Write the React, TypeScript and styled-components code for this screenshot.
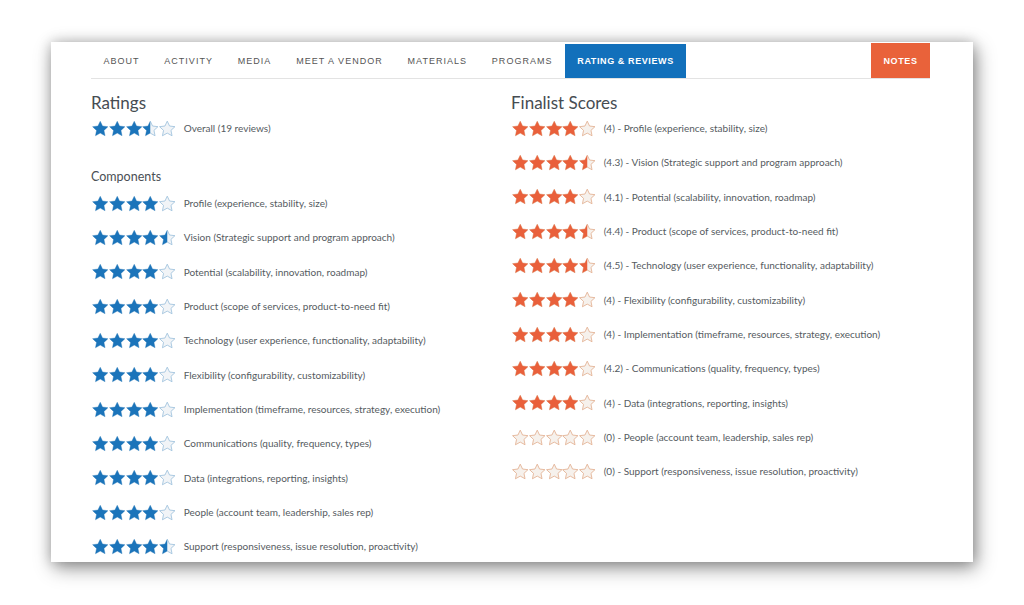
import { useId } from 'react'
import styled, { createGlobalStyle } from 'styled-components'

type StarsProps = {
  value: number
  tone: 'blue' | 'orange'
}

type ScoreRowProps = StarsProps & {
  label: string
}

const palette = {
  blue: { fill: '#1b74ba', emptyFill: '#f1f4f7', emptyStroke: '#9cc0dc' },
  orange: { fill: '#e9603b', emptyFill: '#f6f1ec', emptyStroke: '#e2ae8e' },
}

const tabs = ['About', 'Activity', 'Media', 'Meet a Vendor', 'Materials', 'Programs']

const components = [
  { label: 'Profile (experience, stability, size)', value: 4 },
  { label: 'Vision (Strategic support and program approach)', value: 4.5 },
  { label: 'Potential (scalability, innovation, roadmap)', value: 4 },
  { label: 'Product (scope of services, product-to-need fit)', value: 4 },
  { label: 'Technology (user experience, functionality, adaptability)', value: 4 },
  { label: 'Flexibility (configurability, customizability)', value: 4 },
  { label: 'Implementation (timeframe, resources, strategy, execution)', value: 4 },
  { label: 'Communications (quality, frequency, types)', value: 4 },
  { label: 'Data (integrations, reporting, insights)', value: 4 },
  { label: 'People (account team, leadership, sales rep)', value: 4 },
  { label: 'Support (responsiveness, issue resolution, proactivity)', value: 4.5 },
]

const finalist = [
  { label: '(4) - Profile (experience, stability, size)', value: 4 },
  { label: '(4.3) - Vision (Strategic support and program approach)', value: 4.5 },
  { label: '(4.1) - Potential (scalability, innovation, roadmap)', value: 4 },
  { label: '(4.4) - Product (scope of services, product-to-need fit)', value: 4.5 },
  { label: '(4.5) - Technology (user experience, functionality, adaptability)', value: 4.5 },
  { label: '(4) - Flexibility (configurability, customizability)', value: 4 },
  { label: '(4) - Implementation (timeframe, resources, strategy, execution)', value: 4 },
  { label: '(4.2) - Communications (quality, frequency, types)', value: 4 },
  { label: '(4) - Data (integrations, reporting, insights)', value: 4 },
  { label: '(0) - People (account team, leadership, sales rep)', value: 0 },
  { label: '(0) - Support (responsiveness, issue resolution, proactivity)', value: 0 },
]

// fat five-point star, fits a 20x19 box
const STAR = 'M10 0.6l2.8 5.9 6.5 0.8-4.8 4.5 1.3 6.5L10 15.1l-5.8 3.2 1.3-6.5-4.8-4.5 6.5-0.8z'

export default function App() {
  return (
    <>
      <GlobalStyle />
      <Page>
        <Card>
          <TabBar>
            {tabs.map((t) => (
              <Tab key={t}>{t}</Tab>
            ))}
            <Tab $active>Rating &amp; Reviews</Tab>
            <NotesButton>Notes</NotesButton>
          </TabBar>
          <Columns>
            <Column>
              <Heading>Ratings</Heading>
              <ScoreRow tone="blue" value={3.5} label="Overall (19 reviews)" />
              <SubHeading>Components</SubHeading>
              <RowList>
                {components.map((c) => (
                  <ScoreRow key={c.label} tone="blue" value={c.value} label={c.label} />
                ))}
              </RowList>
            </Column>
            <Column>
              <Heading>Finalist Scores</Heading>
              <RowList>
                {finalist.map((c) => (
                  <ScoreRow key={c.label} tone="orange" value={c.value} label={c.label} />
                ))}
              </RowList>
            </Column>
          </Columns>
        </Card>
      </Page>
    </>
  )
}

const ScoreRow = ({ tone, value, label }: ScoreRowProps) => {
  return (
    <Row>
      <Stars tone={tone} value={value} />
      <RowLabel>{label}</RowLabel>
    </Row>
  )
}

const Stars = ({ tone, value }: StarsProps) => {
  return (
    <StarGroup>
      {[0, 1, 2, 3, 4].map((i) => (
        <Star key={i} tone={tone} part={Math.max(0, Math.min(1, value - i))} />
      ))}
    </StarGroup>
  )
}

const Star = ({ tone, part }: { tone: 'blue' | 'orange'; part: number }) => {
  const id = useId()
  const c = palette[tone]
  return (
    <svg width="16.5" height="17" viewBox="0 0 20 19">
      <defs>
        <clipPath id={id}>
          <rect x="0" y="0" width={20 * part} height="19" />
        </clipPath>
      </defs>
      <path d={STAR} fill={c.emptyFill} stroke={c.emptyStroke} strokeWidth="1" strokeLinejoin="round" />
      {part > 0 && <path d={STAR} fill={c.fill} clipPath={`url(#${id})`} />}
    </svg>
  )
}

const GlobalStyle = createGlobalStyle`
  html, body {
    margin: 0;
    background: #ffffff;
  }
  body {
    font-family: Lato, "Open Sans", sans-serif;
  }
`

const Page = styled.div`
  width: 1024px;
  height: 605px;
  padding: 42px 0 0 51px;
  box-sizing: border-box;
  overflow: hidden;
`

const Card = styled.div`
  width: 922px;
  height: 520px;
  box-sizing: border-box;
  padding: 0 43px 0 40px;
  background: #fff;
  box-shadow: 3px 6px 18px rgba(0, 0, 0, 0.42), 0 0 12px rgba(0, 0, 0, 0.2);
  overflow: hidden;
`

const TabBar = styled.div`
  display: flex;
  align-items: flex-end;
  height: 36px;
  border-bottom: 1px solid #e3e3e3;
`

const Tab = styled.div<{ $active?: boolean }>`
  display: flex;
  align-items: center;
  height: 34px;
  padding: 0 12.4px;
  font-family: 'Liberation Sans', Arial, sans-serif;
  font-size: 9px;
  letter-spacing: ${({ $active }) => ($active ? '0.6px' : '1.02px')};
  text-transform: uppercase;
  font-weight: ${({ $active }) => ($active ? 700 : 400)};
  color: ${({ $active }) => ($active ? '#fff' : '#555')};
  background: ${({ $active }) => ($active ? '#1270bb' : 'transparent')};
`

const NotesButton = styled(Tab)`
  margin-left: auto;
  height: 35px;
  padding: 0 12.5px;
  font-weight: 700;
  letter-spacing: 0.6px;
  color: #fff;
  background: #e9623a;
`

const Columns = styled.div`
  display: grid;
  grid-template-columns: 420px 1fr;
  padding-top: 13px;
`

const Column = styled.div`
  display: flex;
  flex-direction: column;
`

const Heading = styled.h2`
  margin: 0 0 4px;
  font-size: 17px;
  line-height: 22px;
  font-weight: 400;
  color: #464c52;
`

const SubHeading = styled.h3`
  margin: 29px 0 6px;
  font-size: 12.5px;
  line-height: 20px;
  font-weight: 400;
  color: #4a4f55;
`

const RowList = styled.div`
  display: flex;
  flex-direction: column;
  gap: 14.35px;
`

const Row = styled.div`
  display: flex;
  align-items: center;
  height: 20px;
`

const StarGroup = styled.div`
  display: flex;
  gap: 0.3px;
  margin-left: 1px;
`

const RowLabel = styled.span`
  margin-left: 8px;
  font-size: 10px;
  color: #555b61;
  white-space: nowrap;
`
